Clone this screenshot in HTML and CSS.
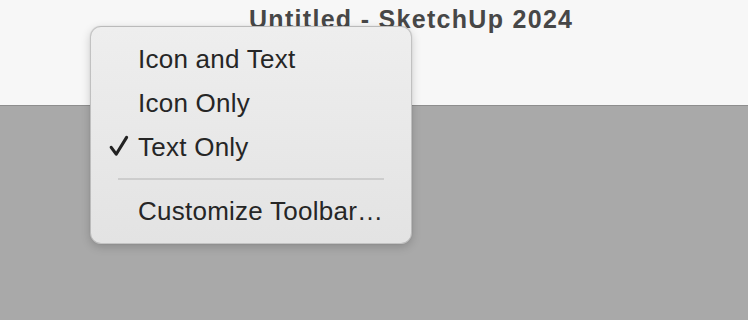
FILE: index.html
```
<!DOCTYPE html>
<html>
<head>
<meta charset="utf-8">
<link rel="stylesheet" href="styles.css">
</head>
<body>
<div class="window">
  <header class="titlebar">
    <h1 class="title">Untitled - SketchUp 2024</h1>
  </header>
  <main class="canvas"></main>
</div>
<ul class="menu">
  <li class="item">Icon and Text</li>
  <li class="item">Icon Only</li>
  <li class="item checked">
    <svg class="check" width="20" height="22" viewBox="0 0 20 22"><path d="M2.2 12.3 L7.2 19.2 L17.6 2.4" fill="none" stroke="#222" stroke-width="3.1" stroke-linecap="round" stroke-linejoin="round"/></svg>
    Text Only
  </li>
  <li class="sep"></li>
  <li class="item">Customize Toolbar…</li>
</ul>
</body>
</html>
```
FILE: styles.css
```
html, body {
  margin: 0;
  padding: 0;
  width: 748px;
  height: 320px;
  overflow: hidden;
  font-family: "Liberation Sans", Arial, sans-serif;
}
.window {
  display: flex;
  flex-direction: column;
  height: 320px;
}
.titlebar {
  height: 101px;
  background: #f7f7f7;
  border-bottom: 1px solid #8e8e8e;
  padding: 4px 0 0 249px;
}
.title {
  margin: 0;
  font-size: 25px;
  line-height: 30px;
  font-weight: bold;
  letter-spacing: 1.3px;
  color: #474747;
  white-space: nowrap;
}
.canvas {
  flex: 1;
  background: #a9a9a9;
}
.menu {
  position: absolute;
  left: 90px;
  top: 26px;
  width: 322px;
  height: 218px;
  box-sizing: border-box;
  margin: 0;
  padding: 10px 0;
  list-style: none;
  border: 1px solid rgba(0, 0, 0, 0.18);
  border-radius: 11px;
  background: linear-gradient(#eeeeee, #e3e3e3);
  box-shadow: 0 3px 10px rgba(0, 0, 0, 0.18), 0 0 1px rgba(0, 0, 0, 0.2);
}
.item {
  position: relative;
  height: 44px;
  line-height: 44px;
  font-size: 26px;
  letter-spacing: 0.25px;
  color: #262626;
  padding-left: 47px;
  white-space: nowrap;
}
.check {
  position: absolute;
  left: 18px;
  top: 10px;
}
.sep {
  height: 20px;
  display: flex;
  align-items: center;
  padding: 0 27px;
}
.sep::before {
  content: "";
  flex: 1;
  height: 2px;
  background: #cdcdcd;
}
```
